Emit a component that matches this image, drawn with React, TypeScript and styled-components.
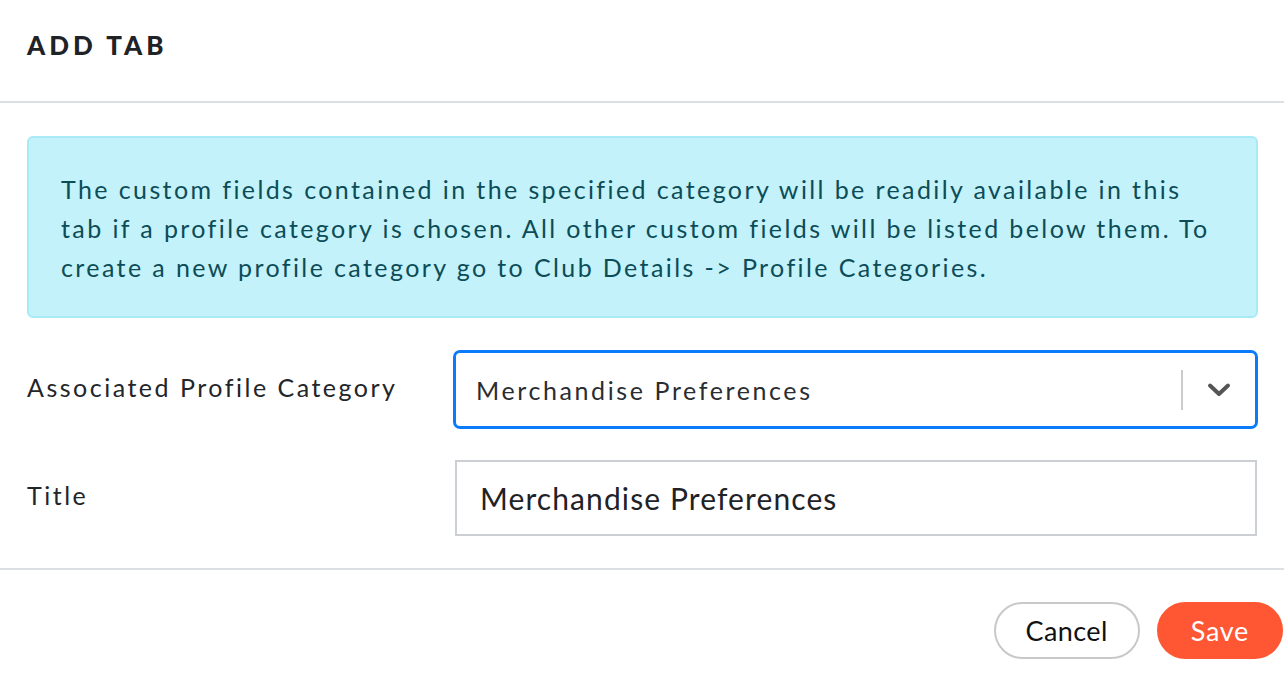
import React from 'react';
import styled, {createGlobalStyle} from 'styled-components';

const GlobalStyle = createGlobalStyle`
  html, body {
    margin: 0;
    padding: 0;
    background: #ffffff;
  }

  body {
    font-family: Lato, "Noto Sans", sans-serif;
    color: #222529;
  }

  * {
    box-sizing: border-box;
  }
`

const Modal = styled.div`
  width: 1284px;
  min-height: 682px;
  display: flex;
  flex-direction: column;
  background: #fff;
`

const Header = styled.div`
  height: 103px;
  padding: 0 27px;
  display: flex;
  align-items: center;
  border-bottom: 2px solid #dcdfe3;
`

const Title = styled.h1`
  margin: 0 0 12px;
  font-size: 26px;
  font-weight: 900;
  letter-spacing: 4px;
  color: #1f2226;
`

const Body = styled.div`
  padding: 33px 26px 32px 27px;
  display: flex;
  flex-direction: column;
  gap: 32px;
  border-bottom: 2px solid #dcdfe3;
`

const Alert = styled.div`
  background: #c3f2fa;
  border: 2px solid #a8ebf7;
  border-radius: 6px;
  padding: 32px 20px 29px 32px;
  font-size: 25px;
  line-height: 39px;
  letter-spacing: 2.4px;
  color: #0c4c57;
  white-space: nowrap;
`

const Fields = styled.div`
  display: flex;
  flex-direction: column;
  gap: 31px;
`

const FieldRow = styled.div<{ $align?: string }>`
  display: grid;
  grid-template-columns: 426px 1fr;
  align-items: ${p => p.$align || 'center'};
`

const Label = styled.label<{ $offset?: number }>`
  font-size: 25px;
  letter-spacing: 2.5px;
  color: #222529;
  margin-top: ${p => p.$offset || 0}px;
`

const Select = styled.div`
  height: 79px;
  border: 3px solid #0a7cfb;
  border-radius: 7px;
  display: flex;
  align-items: center;
  padding-left: 20px;
`

const SelectValue = styled.div`
  flex: 1;
  font-size: 25px;
  letter-spacing: 2.6px;
  color: #2a2d31;
`

const Separator = styled.span`
  width: 2px;
  height: 40px;
  background: #cccccc;
`

const Chevron = styled.span`
  width: 72px;
  display: flex;
  align-items: center;
  justify-content: center;
  color: #555;
`

const TextInput = styled.input`
  height: 76px;
  margin-left: 2px;
  width: calc(100% - 3px);
  border: 2px solid #ccd0d4;
  border-radius: 0;
  padding: 0 23px;
  font-family: Lato, "Noto Sans", sans-serif;
  font-size: 30px;
  letter-spacing: 1.1px;
  color: #1f2226;
  outline: none;
`

const Footer = styled.div`
  flex: 1;
  display: flex;
  justify-content: flex-end;
  align-items: center;
  gap: 17px;
  padding: 8px 1px 0 0;
`

const Button = styled.button<{ $primary?: boolean }>`
  height: 57px;
  padding: 0 ${p => p.$primary ? 32 : 30}px;
  border-radius: 29px;
  font-family: Lato, "Noto Sans", sans-serif;
  font-size: 27px;
  letter-spacing: ${p => p.$primary ? 0.7 : 0.4}px;
  cursor: pointer;
  border: 2px solid ${p => p.$primary ? '#ff5733' : '#c8c8c8'};
  background: ${p => p.$primary ? '#ff5733' : '#fff'};
  color: ${p => p.$primary ? '#fff' : '#111'};
`

const alertLines = [
    'The custom fields contained in the specified category will be readily available in this',
    'tab if a profile category is chosen. All other custom fields will be listed below them. To',
    'create a new profile category go to Club Details -> Profile Categories.',
]

const App: React.FC = () => {
    const [title, setTitle] = React.useState('Merchandise Preferences');

    return (
        <>
            <GlobalStyle/>
            <Modal>
                <Header>
                    <Title>ADD TAB</Title>
                </Header>
                <Body>
                    <Alert>
                        {alertLines.map((line, i) => (
                            <React.Fragment key={i}>
                                {line}
                                {i < alertLines.length - 1 && <br/>}
                            </React.Fragment>
                        ))}
                    </Alert>
                    <Fields>
                        <FieldRow>
                            <Label $offset={-6}>Associated Profile Category</Label>
                            <Select>
                                <SelectValue>Merchandise Preferences</SelectValue>
                                <Separator/>
                                <Chevron>
                                    <svg width="24" height="16" viewBox="0 0 24 16" fill="none">
                                        <path d="M3 3.5L12 12L21 3.5" stroke="currentColor" strokeWidth="4"
                                              strokeLinecap="round" strokeLinejoin="round"/>
                                    </svg>
                                </Chevron>
                            </Select>
                        </FieldRow>
                        <FieldRow $align="start">
                            <Label $offset={20}>Title</Label>
                            <TextInput value={title} onChange={e => setTitle(e.target.value)}/>
                        </FieldRow>
                    </Fields>
                </Body>
                <Footer>
                    <Button>Cancel</Button>
                    <Button $primary>Save</Button>
                </Footer>
            </Modal>
        </>
    )
};

export default App;
